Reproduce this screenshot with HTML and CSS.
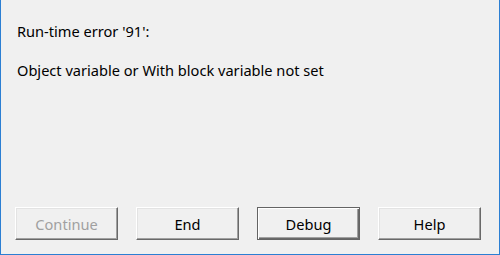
FILE: index.html
```html
<!DOCTYPE html>
<html lang="en">
<head>
    <meta charset="UTF-8">
    <title>Microsoft Visual Basic</title>
    <link rel="stylesheet" href="styles.css">
</head>
<body>
    <div class="dialog">
        <div class="message">
            <p class="title">Run-time error '91':</p>
            <p class="text">Object variable or With block variable not set</p>
        </div>
        <div class="buttons">
            <button class="btn" disabled>Continue</button>
            <button class="btn">End</button>
            <button class="btn default">Debug</button>
            <button class="btn">Help</button>
        </div>
    </div>
</body>
</html>
```
FILE: styles.css
```css
*{
    margin:0;
    padding:0;
    box-sizing: border-box;
}
body{
    width: 500px;
    height: 255px;
    background-color: #f0f0f0;
    font-family: "Noto Sans", "Segoe UI", sans-serif;
    font-size: 14.6px;
    color: #000;
}
.dialog{
    height: 255px;
    display: flex;
    flex-direction: column;
    justify-content: space-between;
    border-left: 1px solid #2b7fd3;
    border-right: 1px solid #2b7fd3;
    border-bottom: 1px solid #2b7fd3;
    padding: 22px 0 14px 16px;
}
.title{
    line-height: 18px;
}
.text{
    margin-top: 21px;
    line-height: 18px;
}
.buttons{
    display: flex;
    gap: 18px;
    margin-left: -2px;
}
.btn{
    width: 103px;
    height: 33px;
    font-family: inherit;
    font-size: 14.6px;
    color: #000;
    background-color: #f0f0f0;
    border-top: 1px solid #fff;
    border-left: 1px solid #fff;
    border-right: 1px solid #696969;
    border-bottom: 1px solid #696969;
    box-shadow: inset -1px -1px 0 #a0a0a0, inset 1px 1px 0 #e3e3e3;
}
.btn:disabled{
    color: #a0a0a0;
}
.btn.default{
    border: 1px solid #646464;
    box-shadow: inset 1px 1px 0 #fff, inset -1px -1px 0 #696969, inset -2px -2px 0 #a0a0a0;
}
```
